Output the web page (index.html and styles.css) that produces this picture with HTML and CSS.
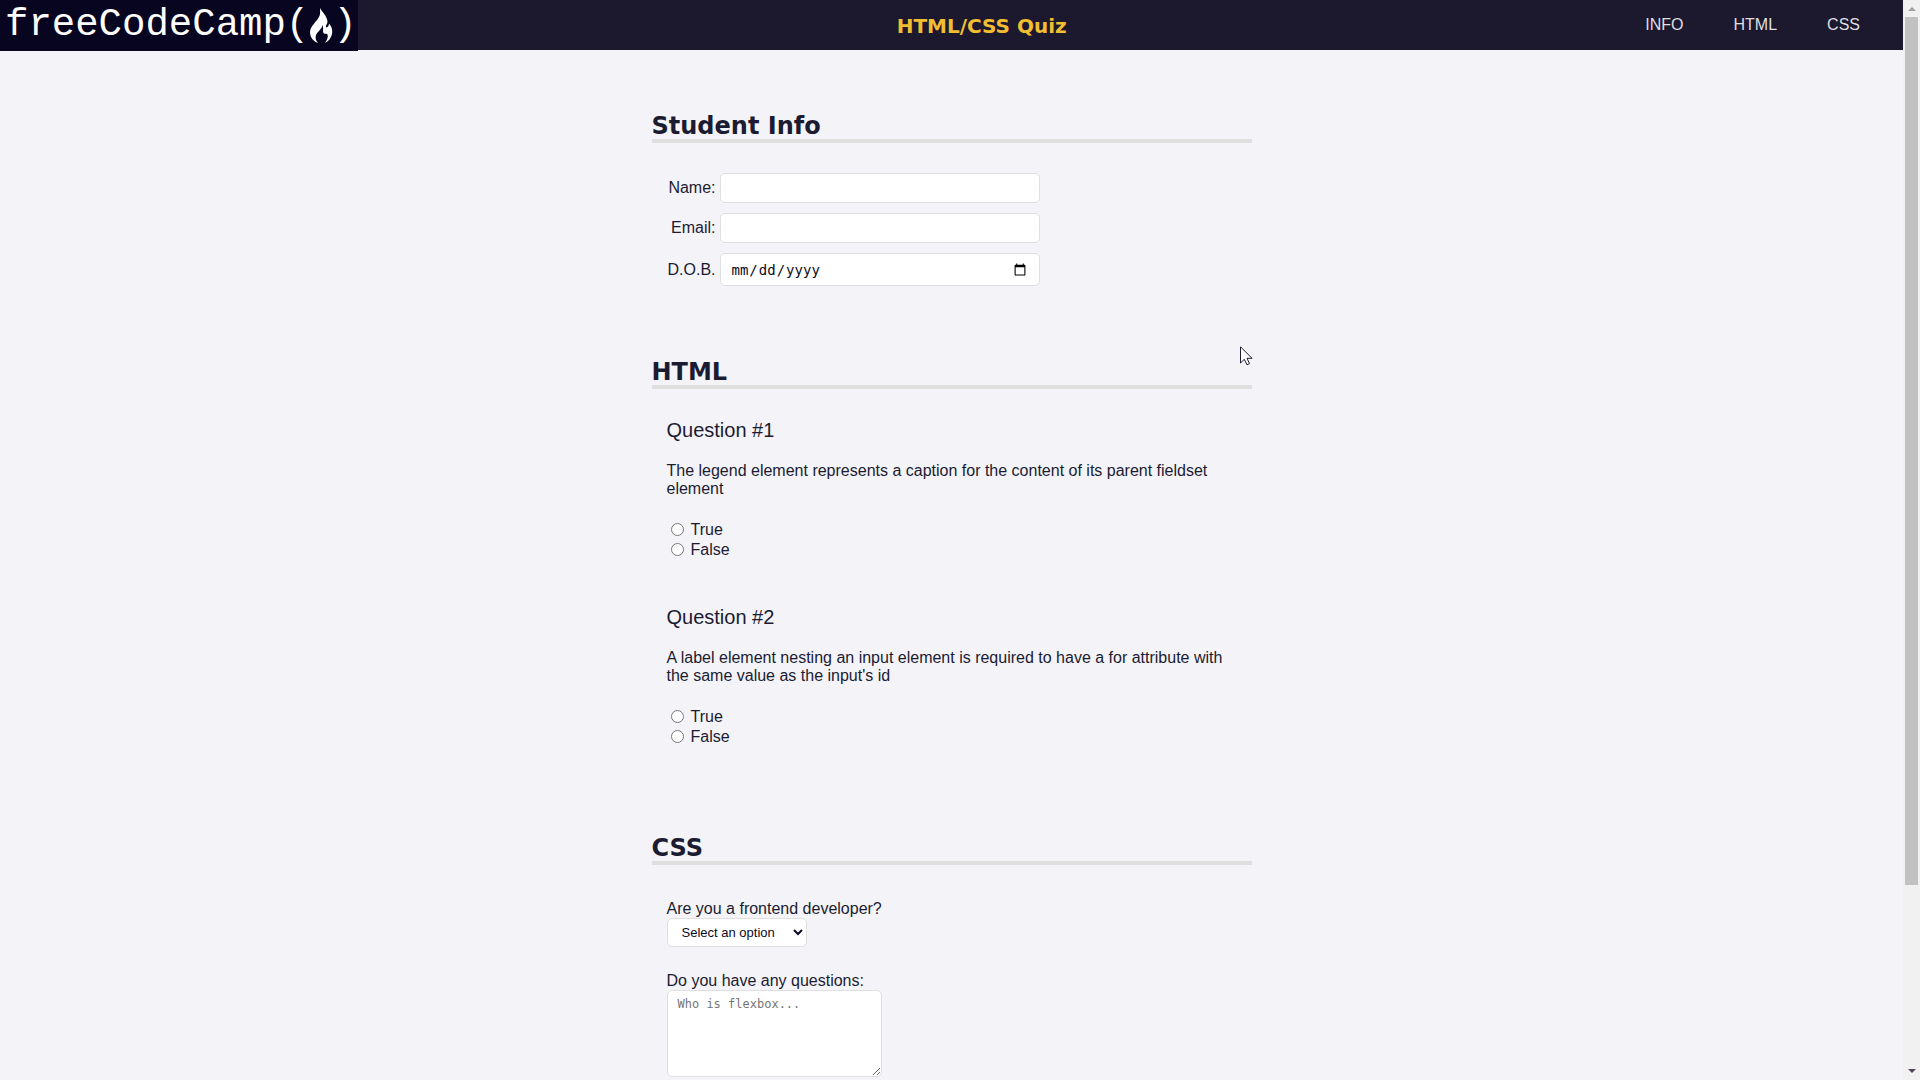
FILE: index.html
```html
<!DOCTYPE html>
<html lang="en-US">
<head>
  <meta charset="UTF-8">
  <meta name="viewport" content="width=device-width, initial-scale=1.0">
  <title>HTML/CSS Quiz</title>
  <link rel="stylesheet" href="styles.css">
</head>
<body>
  <div class="page">
    <header class="header">
      <div class="logo" role="img" aria-label="freeCodeCamp">freeCodeCamp(<svg class="flame" viewBox="0 0 24 36" aria-hidden="true"><path d="M11 0C13 4 18 8 18.500 13.500C18.500 16 16.500 17 17 19C18 20.500 20 18 20 15.500C22 18 24 21 23 26C22 30 20 33 16 35C18 32 19.500 29 18.500 26.500C18 25 16.500 26.500 15 25.500C13 24 15 20 13.500 17C13 21 9 23 7 27C6 30 7 33 9 35C4 33 1 29 1 24C1.500 17 8 14 10.500 8C11.500 5 11 3 11 0Z"/></svg>)</div>
      <h1 class="title">HTML/CSS Quiz</h1>
      <nav class="nav">
        <a href="#student-info">INFO</a>
        <a href="#html-questions">HTML</a>
        <a href="#css-questions">CSS</a>
      </nav>
    </header>

    <main>
      <form>
        <section class="section" aria-labelledby="student-info">
          <h2 id="student-info">Student Info</h2>
          <div class="info">
            <label for="student-name">Name:</label>
            <input class="field" type="text" id="student-name">
            <label for="student-email">Email:</label>
            <input class="field" type="email" id="student-email">
            <label for="birth-date">D.O.B.</label>
            <input class="field date" type="date" id="birth-date">
          </div>
        </section>

        <section class="section" aria-labelledby="html-questions">
          <h2 id="html-questions">HTML</h2>
          <div class="questions">
            <fieldset class="question">
              <legend>Question #1</legend>
              <p>The legend element represents a caption for the content of its parent fieldset element</p>
              <ul class="answers">
                <li><label><input type="radio" name="q1" value="true">True</label></li>
                <li><label><input type="radio" name="q1" value="false">False</label></li>
              </ul>
            </fieldset>
            <fieldset class="question">
              <legend>Question #2</legend>
              <p>A label element nesting an input element is required to have a for attribute with the same value as the input's id</p>
              <ul class="answers">
                <li><label><input type="radio" name="q2" value="true">True</label></li>
                <li><label><input type="radio" name="q2" value="false">False</label></li>
              </ul>
            </fieldset>
          </div>
        </section>

        <section class="section" aria-labelledby="css-questions">
          <h2 id="css-questions">CSS</h2>
          <div class="form-rows">
            <div class="form-row">
              <label for="customer">Are you a frontend developer?</label>
              <select id="customer">
                <option>Select an option</option>
                <option>Yes</option>
                <option>No</option>
              </select>
            </div>
            <div class="form-row">
              <label for="custom-questions">Do you have any questions:</label>
              <textarea id="custom-questions" rows="5" placeholder="Who is flexbox..."></textarea>
            </div>
          </div>
        </section>
      </form>
    </main>
  </div>

  <div class="scrollbar" aria-hidden="true">
    <svg class="arrow arrow-up" viewBox="0 0 8 4"><path d="M0 4L4 0L8 4Z"/></svg>
    <div class="track"><div class="thumb"></div></div>
    <svg class="arrow" viewBox="0 0 8 4"><path d="M0 0H8L4 4Z"/></svg>
  </div>

  <svg class="cursor" viewBox="0 0 13 20" aria-hidden="true"><path d="M.5 .8V17L4.300 13.300L7 18.800L9.500 17.600L7 12.300H12Z"/></svg>
</body>
</html>
```

FILE: styles.css
```css
* {
  box-sizing: border-box;
}

body {
  display: grid;
  grid-template-columns: 1fr 17px;
  height: 100vh;
  margin: 0;
  overflow: hidden;
  background: #f4f4f8;
  color: #1b1b32;
  font: 16px/18px "Liberation Sans", Arial, sans-serif;
}

.page {
  min-width: 0;
  overflow: hidden;
}

.header {
  display: flex;
  justify-content: space-between;
  align-items: center;
  height: 50px;
  background: #1c182e;
}

.logo {
  display: flex;
  align-items: center;
  align-self: flex-start;
  flex: none;
  width: 358px;
  height: 51px;
  padding-left: 5px;
  background: #080520;
  color: #fff;
  font: 39px/51px "Liberation Mono", monospace;
}

.flame {
  width: 24px;
  height: 36px;
  fill: #fff;
}

.title {
  margin: 0;
  padding-top: 2px;
  color: #f1be32;
  font: bold 20px/24px Verdana, "DejaVu Sans", sans-serif;
}

.nav {
  display: flex;
  gap: 50px;
  padding: 0 43px 0 40px;
}

.nav a {
  color: #dfdfe2;
  text-decoration: none;
}

.section {
  width: 80%;
  max-width: 600px;
  margin: 0 auto 10px;
}

h2 {
  margin: 0;
  padding-top: 64px;
  border-bottom: 4px solid #dfdfe0;
  font: bold 24px/25px Verdana, "DejaVu Sans", sans-serif;
}

.info {
  display: grid;
  grid-template-columns: 49px 320px;
  gap: 10px 4px;
  align-items: center;
  padding: 30px 15px 0;
}

.info label {
  text-align: right;
}

.field,
select,
textarea {
  margin: 0;
  border: 1px solid #dfdfe2;
  border-radius: 5px;
  background: #fff;
}

.field {
  width: 100%;
  height: 30px;
  padding: 5px 10px;
}

.date {
  height: 33px;
  color: #0a0a23;
  font: 14px/20px "DejaVu Sans Mono", monospace;
}

.questions {
  display: grid;
  gap: 46px;
  padding: 30px 15px 15px;
}

.question {
  min-width: 0;
  margin: 0;
  padding: 0;
  border: 0;
}

legend {
  padding: 0;
  font-size: 20px;
  line-height: 23px;
}

.question p {
  margin: 20px 0 22px;
}

.answers {
  margin: 0;
  padding: 0;
  list-style: none;
}

.answers label {
  display: flex;
  align-items: center;
  gap: 7px;
  height: 20px;
}

.answers input {
  width: 13px;
  height: 13px;
  margin: 0 0 2px 4px;
}

.form-rows {
  display: grid;
  gap: 25px;
  padding: 35px 15px 0;
}

.form-row {
  display: grid;
  justify-items: start;
}

select {
  width: 140px;
  height: 29px;
  padding: 0 10px;
  color: #0a0a23;
  font: 13px "Liberation Sans", Arial, sans-serif;
}

textarea {
  width: 215px;
  height: 87px;
  padding: 5px 10px;
  font: 12px/16px "DejaVu Sans Mono", monospace;
}

.scrollbar {
  display: flex;
  flex-direction: column;
  align-items: center;
  gap: 6px;
  padding: 7px 2px;
  background: #f0f1f0;
}

.arrow {
  width: 8px;
  height: 4px;
  fill: #504458;
}

.arrow-up {
  fill: #a0a0a0;
}

.track {
  flex: 1;
  width: 13px;
}

.thumb {
  height: 83%;
  background: #c1c1c1;
}

.cursor {
  position: absolute;
  top: 346px;
  left: 1240px;
  width: 13px;
  height: 20px;
  fill: #fff;
  stroke: #1b1b32;
}
```
